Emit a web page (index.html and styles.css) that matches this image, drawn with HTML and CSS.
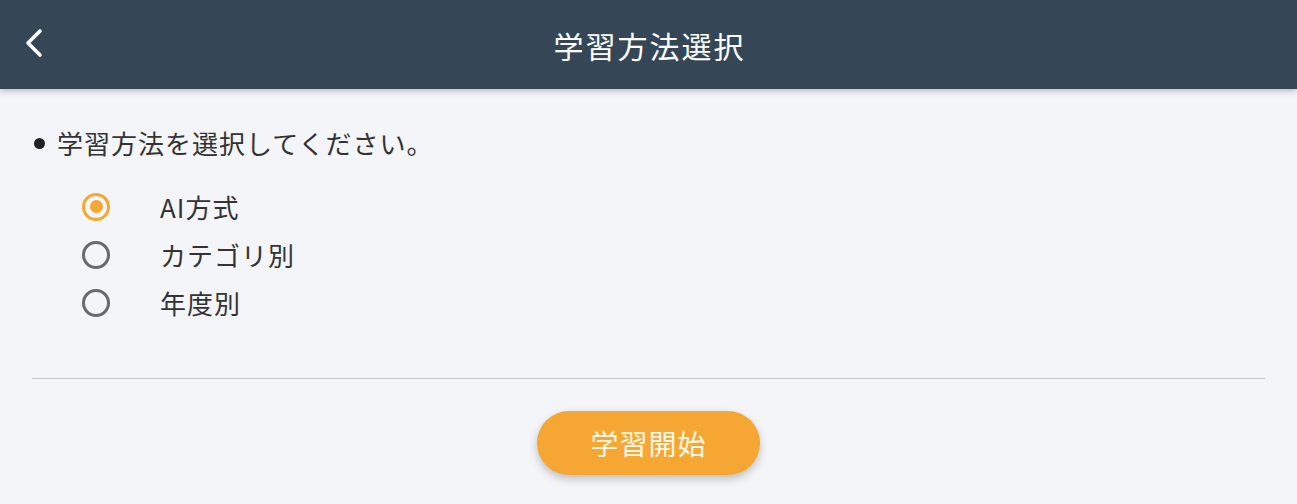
FILE: index.html
```html
<!DOCTYPE html>
<html lang="ja">
<head>
  <meta charset="UTF-8">
  <title>学習方法選択</title>
  <link rel="stylesheet" href="styles.css">
</head>
<body>

  <!-- Header -->
  <header class="app-header">
    <a class="back-btn" href="#">
      <svg width="22" height="30" viewBox="0 0 22 30">
        <path d="M17 3 L5 15 L17 27" fill="none" stroke="#fff" stroke-width="3.6" stroke-linecap="round" stroke-linejoin="round"/>
      </svg>
    </a>
    <h1 class="header-title">学習方法選択</h1>
  </header>

  <!-- Method select -->
  <main class="content">
    <p class="prompt"><span class="dot"></span>学習方法を選択してください。</p>

    <form class="method-list">
      <label class="method">
        <input type="radio" name="method" value="ai" checked>
        <span class="radio"></span>
        <span class="method-label">AI方式</span>
      </label>
      <label class="method">
        <input type="radio" name="method" value="category">
        <span class="radio"></span>
        <span class="method-label">カテゴリ別</span>
      </label>
      <label class="method">
        <input type="radio" name="method" value="year">
        <span class="radio"></span>
        <span class="method-label">年度別</span>
      </label>
    </form>

    <hr class="divider">

    <div class="actions">
      <button class="start-btn" type="button">学習開始</button>
    </div>
  </main>

</body>
</html>
```

FILE: styles.css
```css
* { margin: 0; padding: 0; box-sizing: border-box; }
body {
  font-family: "Noto Sans CJK JP", "Noto Sans", sans-serif;
  background: #f4f5f8;
  color: #333;
  height: 504px;
  overflow: hidden;
}
.app-header {
  position: relative;
  height: 89px;
  background: #354756;
  display: flex;
  align-items: center;
  justify-content: center;
  box-shadow: 0 2px 6px rgba(0,0,0,0.25);
}
.back-btn {
  position: absolute;
  left: 23px;
  top: 28px;
  display: flex;
}
.header-title {
  color: #fff;
  font-size: 30px;
  font-weight: 400;
  letter-spacing: 2px;
  margin-left: 2px;
}
.content { padding: 0 32px; }
.prompt {
  display: flex;
  align-items: center;
  margin-top: 36px;
  font-size: 26px;
  letter-spacing: 1px;
  line-height: 36px;
  color: #333;
}
.dot {
  width: 11px;
  height: 11px;
  border-radius: 50%;
  background: #222;
  margin: 0 12px 0 2px;
}
.method-list {
  display: flex;
  flex-direction: column;
  gap: 13px;
  padding: 28px 0 0 50px;
}
.method {
  display: flex;
  align-items: center;
  height: 35px;
}
.method input { display: none; }
.radio {
  width: 28px;
  height: 28px;
  border-radius: 50%;
  border: 3px solid #6a6a6a;
  display: flex;
  align-items: center;
  justify-content: center;
}
.method input:checked + .radio { border-color: #f5a733; }
.method input:checked + .radio::after {
  content: "";
  width: 13px;
  height: 13px;
  border-radius: 50%;
  background: #f5a733;
}
.method-label {
  margin-left: 50px;
  font-size: 26px;
  letter-spacing: 1px;
  color: #333;
}
.divider {
  border: none;
  border-top: 1.5px solid #c6c6c6;
  margin-top: 58px;
}
.actions {
  display: flex;
  justify-content: center;
  padding-top: 32px;
}
.start-btn {
  width: 223px;
  height: 64px;
  border: none;
  border-radius: 32px;
  background: #f6a733;
  color: #fff8e6;
  font-family: inherit;
  font-size: 28px;
  letter-spacing: 1px;
  box-shadow: 0 4px 8px rgba(0,0,0,0.22);
  cursor: pointer;
}
```
